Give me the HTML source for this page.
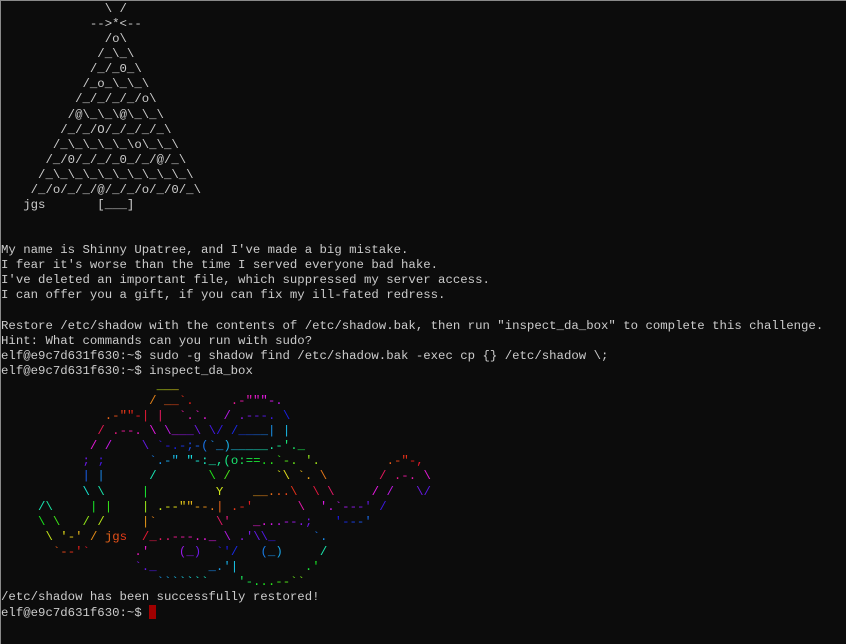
<!DOCTYPE html>
<html><head><meta charset="utf-8">
<style>
html,body{margin:0;padding:0;background:#0c0c0c;}
body{width:846px;height:644px;overflow:hidden;position:relative;}
#frame{position:absolute;left:0;top:0;width:845px;height:643px;border-left:1px solid #8a8a8a;border-top:1px solid #8a8a8a;background:#0c0c0c;}
pre{position:absolute;left:1px;top:2px;margin:0;font-family:"Liberation Mono",monospace;font-size:12.35px;line-height:15.08px;color:#cccccc;white-space:pre;}
.cur{display:inline-block;width:7px;height:14px;background:#a00000;vertical-align:-3px;margin-left:0px;}
</style></head><body><div id="frame"></div>
<pre>              \ /
            --&gt;*&lt;--
              /o\
             /_\_\
            /_/_0_\
           /_o_\_\_\
          /_/_/_/_/o\
         /@\_\_\@\_\_\
        /_/_/O/_/_/_/_\
       /_\_\_\_\_\o\_\_\
      /_/0/_/_/_0_/_/@/_\
     /_\_\_\_\_\_\_\_\_\_\
    /_/o/_/_/@/_/_/o/_/0/_\
   jgs       [___]


My name is Shinny Upatree, and I've made a big mistake.
I fear it's worse than the time I served everyone bad hake.
I've deleted an important file, which suppressed my server access.
I can offer you a gift, if you can fix my ill-fated redress.

Restore /etc/shadow with the contents of /etc/shadow.bak, then run "inspect_da_box" to complete this challenge.
Hint: What commands can you run with sudo?
elf@e9c7d631f630:~$ sudo -g shadow find /etc/shadow.bak -exec cp {} /etc/shadow \;
elf@e9c7d631f630:~$ inspect_da_box
<span id="art">                     ___
                    / __&#96;.     .-"""-.
              .-""-| |  &#96;.&#96;.  / .---. \
             / .--. \ \___\ \/ /____| |
            / /    \ &#96;-.-;-(&#96;_)_____.-'._
           ; ;      &#96;.-" "-:_,(o:==..&#96;-. '.         .-"-,
           | |      /       \ /      &#96;\ &#96;. \       / .-. \
           \ \     |         Y    __...\  \ \     / /   \/
     /\     | |    | .--""--.| .-'      \  '.&#96;---' /
     \ \   / /     |&#96;        \'   _...--.;   '---'
      \ '-' / jgs  /_..---.._ \ .'\\_     &#96;.
       &#96;--'&#96;      .'    (_)  &#96;'/   (_)     /
                  &#96;._       _.'|         .'
                     &#96;&#96;&#96;&#96;&#96;&#96;&#96;    '-...--&#96;&#96;</span>
/etc/shadow has been successfully restored!
elf@e9c7d631f630:~$ <span class="cur"></span></pre>
<script>
(function(){
var el=document.getElementById('art');
var lines=el.textContent.split('\n');
var out=[];
for(var i=0;i<lines.length;i++){
  var r=25+i, s=lines[i], h='';
  for(var c=0;c<s.length;c++){
    var ch=s[c];
    if(ch===' '){h+=' ';continue;}
    var hue=265-45*(r-30)-6*(c-11);
    hue=((hue%360)+360)%360;
    var e=ch==='&'?'&amp;':ch==='<'?'&lt;':ch==='>'?'&gt;':ch;
    h+='<span style="color:hsl('+hue.toFixed(0)+',80%,50%)">'+e+'</span>';
  }
  out.push(h);
}
el.innerHTML=out.join('\n');
})();
</script>
</body></html>
